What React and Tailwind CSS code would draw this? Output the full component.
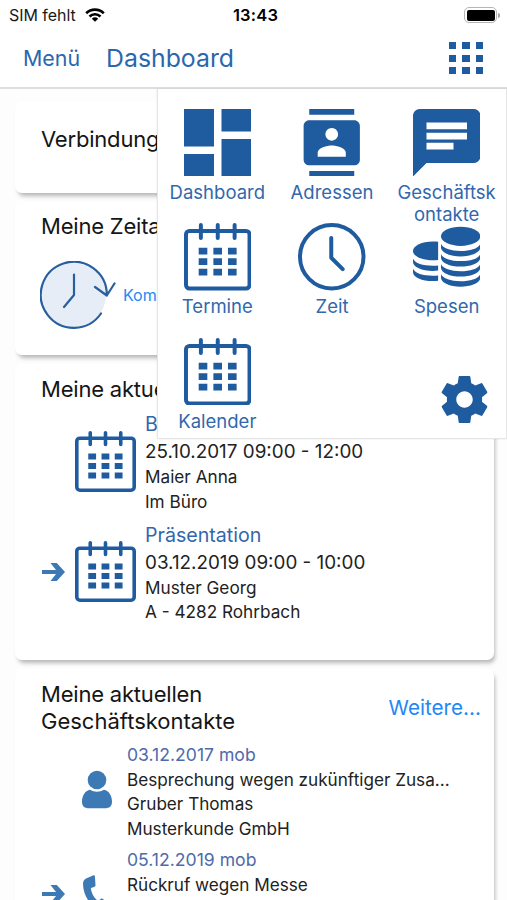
import React from "react";

const CalendarIcon = ({ className }) => (
  <svg viewBox="0 0 68 68" className={className} fill="none">
    <rect x="2" y="8" width="64" height="58" rx="3.5" stroke="currentColor" strokeWidth="4" />
    <path
      d="M17 2v13M34 2v13M51 2v13"
      stroke="currentColor"
      strokeWidth="4"
      strokeLinecap="round"
    />
    <path
      d="M14.8 25h8.7v6.8h-8.7zM29.6 25h8.7v6.8h-8.7zM44.3 25H53v6.8h-8.7zM14.8 35.6h8.7v6.8h-8.7zM29.6 35.6h8.7v6.8h-8.7zM44.3 35.6H53v6.8h-8.7zM14.8 46.2h8.7V53h-8.7zM29.6 46.2h8.7V53h-8.7zM44.3 46.2H53V53h-8.7z"
      fill="currentColor"
    />
  </svg>
);

const DashboardIcon = ({ className }) => (
  <svg viewBox="3 3 18 18" className={className} fill="currentColor">
    <path d="M3 13h8V3H3v10zm0 8h8v-6H3v6zm10 0h8V11h-8v10zm0-18v6h8V3h-8z" />
  </svg>
);

const ContactsIcon = ({ className }) => (
  <svg viewBox="0 0 24 24" className={className} fill="currentColor">
    <path d="M20 0H4v2h16V0zM4 24h16v-2H4v2zM20 4H4c-1.1 0-2 .9-2 2v12c0 1.1.9 2 2 2h16c1.1 0 2-.9 2-2V6c0-1.1-.9-2-2-2zm-8 2.75c1.24 0 2.25 1.01 2.25 2.25s-1.01 2.25-2.25 2.25S9.75 10.24 9.75 9 10.76 6.75 12 6.75zM17 17H7v-1.5c0-1.67 3.33-2.5 5-2.5s5 .83 5 2.5V17z" />
  </svg>
);

const ChatIcon = ({ className }) => (
  <svg viewBox="2 2 20 20" className={className} fill="currentColor">
    <path d="M20 2H4c-1.1 0-1.99.9-1.99 2L2 22l4-4h14c1.1 0 2-.9 2-2V4c0-1.1-.9-2-2-2zM6 9h12v2H6V9zm8 5H6v-2h8v2zm4-6H6V6h12v2z" />
  </svg>
);

const ClockIcon = ({ className }) => (
  <svg viewBox="0 0 68 68" className={className} fill="none">
    <circle cx="34" cy="34" r="32" stroke="currentColor" strokeWidth="4" />
    <path
      d="M33.5 15v20l11.5 11.5"
      stroke="currentColor"
      strokeWidth="4"
      strokeLinecap="round"
      strokeLinejoin="round"
    />
  </svg>
);

const CoinsIcon = ({ className }) => (
  <svg viewBox="0 -3.7 68 68" className={className} fill="currentColor">
    <ellipse cx="48" cy="9.7" rx="19.8" ry="9.7" />
    <path d="M28.2 17.3C30 22 38 24.5 48 24.5S66 22 67.8 17.3V21c0 5-8.8 9-19.8 9s-19.8-4-19.8-9z" />
    <path d="M28.2 27.5C30 32.2 38 34.7 48 34.7s18-2.5 19.8-7.2v3.7c0 5-8.8 9-19.8 9s-19.8-4-19.8-9z" />
    <path d="M28.2 37.6C30 42.3 38 44.8 48 44.8s18-2.5 19.8-7.2v3.7c0 5-8.8 9-19.8 9s-19.8-4-19.8-9z" />
    <path d="M28.2 47.7C30 52.4 38 54.9 48 54.9s18-2.5 19.8-7.2v3.7c0 5-8.8 9-19.8 9s-19.8-4-19.8-9z" />
    <path d="M25.3 15.3C23.6 15 21.8 14.9 20 14.9c-11 0-20 4.2-20 9.5s9 9.5 20 9.5c1.8 0 3.6-.1 5.3-.4z" />
    <path d="M0 32.3c2 4.5 10 7 20 7 1.8 0 3.6-.1 5.3-.3v5.2c-1.7.3-3.5.4-5.3.4-11 0-20-4-20-9z" />
    <path d="M0 42.5c2 4.5 10 7 20 7 1.8 0 3.6-.1 5.3-.3v5.2c-1.7.3-3.5.4-5.3.4-11 0-20-4-20-9z" />
  </svg>
);

const GearIcon = ({ className }) => (
  <svg viewBox="2 2 20 20" className={className} fill="currentColor">
    <path d="M19.43 12.98c.04-.32.07-.64.07-.98s-.03-.66-.07-.98l2.11-1.65c.19-.15.24-.42.12-.64l-2-3.46c-.12-.22-.39-.3-.61-.22l-2.49 1c-.52-.4-1.08-.73-1.69-.98l-.38-2.65C14.46 2.18 14.25 2 14 2h-4c-.25 0-.46.18-.49.42l-.38 2.65c-.61.25-1.17.59-1.69.98l-2.49-1c-.23-.09-.49 0-.61.22l-2 3.46c-.13.22-.07.49.12.64l2.11 1.65c-.04.32-.07.65-.07.98s.03.66.07.98l-2.11 1.65c-.19.15-.24.42-.12.64l2 3.46c.12.22.39.3.61.22l2.49-1c.52.4 1.08.73 1.69.98l.38 2.65c.03.24.24.42.49.42h4c.25 0 .46-.18.49-.42l.38-2.65c.61-.25 1.17-.59 1.69-.98l2.49 1c.23.09.49 0 .61-.22l2-3.46c.12-.22.07-.49-.12-.64l-2.11-1.65zM12 15.5c-1.93 0-3.5-1.57-3.5-3.5s1.57-3.5 3.5-3.5 3.5 1.57 3.5 3.5-1.57 3.5-3.5 3.5z" />
  </svg>
);

const ArrowIcon = ({ className }) => (
  <svg viewBox="0 0 24 18" className={className} fill="currentColor">
    <path d="M0 7h14L8.5 0h6.3L23 9l-8.2 9H8.5L14 11H0z" />
  </svg>
);

const PersonIcon = ({ className }) => (
  <svg viewBox="0 0 32 40" className={className} fill="currentColor">
    <circle cx="16" cy="10" r="9.3" />
    <path d="M9 19.8c4 2.6 10 2.6 14 0 5 .8 8 6.2 8 12 0 4.5-2.5 6.5-7 6.5H8c-4.5 0-7-2-7-6.5 0-5.8 3-11.2 8-12z" />
  </svg>
);

const PhoneIcon = ({ className }) => (
  <svg viewBox="0 0 30 36" className={className} fill="currentColor">
    <path d="M4 3.5 11 .5c1-.4 1.8 0 1.9 1l.6 8.5c0 1-.4 1.6-1.3 1.9l-3.4 1c.5 5 3 9.5 7 13l3-2c.8-.6 1.600-.5 2.300.2l5.500 6c.6.8.5 1.500-.3 2.200l-4.500 3.200C10 34 1.500 22 1 9.500.9 6.500 2 4.500 4 3.500z" />
  </svg>
);

const HistoryIcon = ({ className }) => (
  <svg viewBox="0 0 76 68" className={className} fill="none">
    <circle cx="34" cy="34" r="32" fill="#e7edf6" />
    <path
      d="M61 52.5A33 33 0 1 1 66.8 34M34 13.5V34l-10 12M55 26l11.8 8.5L74.5 22.5"
      stroke="currentColor"
      strokeWidth="2.2"
      strokeLinecap="round"
      strokeLinejoin="round"
    />
  </svg>
);

const menuItems = [
  { label: "Dashboard", Icon: DashboardIcon },
  { label: "Adressen", Icon: ContactsIcon },
  { label: "Geschäftskontakte", Icon: ChatIcon },
  { label: "Termine", Icon: CalendarIcon },
  { label: "Zeit", Icon: ClockIcon },
  { label: "Spesen", Icon: CoinsIcon },
  { label: "Kalender", Icon: CalendarIcon },
];

const appointments = [
  {
    title: "B",
    time: "25.10.2017 09:00 - 12:00",
    person: "Maier Anna",
    place: "Im Büro",
  },
  {
    title: "Präsentation",
    time: "03.12.2019 09:00 - 10:00",
    person: "Muster Georg",
    place: "A - 4282 Rohrbach",
    next: true,
  },
];

const StatusBar = () => (
  <div className="grid grid-cols-3 items-center h-[30px] pl-[9px] pr-[7px] text-[#1a1a1a]">
    <div className="flex items-center gap-[9px]">
      <span className="text-[16px] tracking-[-0.05px]">SIM fehlt</span>
      <svg viewBox="0 0 20 14" className="w-5 h-[14px]" fill="none" stroke="#000" strokeWidth="2.6">
        <path d="M1.2 5.2a12.6 12.6 0 0 1 17.6 0" />
        <path d="M4.5 8.5a8 8 0 0 1 11 0" />
        <path d="M10 13.8 6.8 10.7a4.7 4.7 0 0 1 6.4 0z" fill="#000" stroke="none" />
      </svg>
    </div>
    <span className="pl-[2px] text-center text-[16.5px] font-semibold tracking-[0.2px] text-black">
      13:43
    </span>
    <div className="flex items-center justify-end gap-px">
      <div className="w-[33px] h-4 rounded-[5px] border-[1.5px] border-[#b5b5b5] p-[1.5px]">
        <div className="h-full rounded-[2px] bg-black"></div>
      </div>
      <div className="w-[2px] h-[5px] rounded-r bg-[#a5a5a5]"></div>
    </div>
  </div>
);

const Card = ({ className, children }) => (
  <section
    className={`bg-white rounded-[7px] shadow-[2px_4px_4px_-1px_rgba(0,0,0,0.28)] pl-[26px] ${className}`}
  >
    {children}
  </section>
);

const CardTitle = ({ children }) => (
  <h2 className="text-[22px] leading-[27px] tracking-[-0.2px] text-[#151515]">{children}</h2>
);

const Menu = () => (
  <div className="absolute top-0 right-0 w-[350px] h-[349.5px] bg-white border border-t-0 border-[#e6e6e6] shadow-[0_0_2px_rgba(0,0,0,0.1)]">
    <div className="grid grid-cols-3 auto-rows-[114.7px] pt-[19.5px] pl-[2px] pr-[2px]">
      {menuItems.map(({ label, Icon }) => (
        <button key={label} className="flex flex-col items-center text-[#1f5b9f]">
          <Icon className="w-[67.5px] h-[67.5px] shrink-0" />
          <span className="w-[100px] mt-[4.5px] text-[18.5px] leading-[22px] break-all text-center text-[#3168ad]">
            {label}
          </span>
        </button>
      ))}
    </div>
    <button className="absolute right-[18.5px] bottom-[15px] text-[#1f5b9f]">
      <GearIcon className="w-[47px] h-[47px]" />
    </button>
  </div>
);

const App = () => {
  return (
    <div className="h-[900px] overflow-hidden bg-[#fdfdfd] font-['Inter',sans-serif]">
      {/* Header */}
      <header className="h-[89px] bg-white border-b-2 border-[#dedede]">
        <StatusBar />
        <div className="flex items-center h-14 pl-[23px] pr-[24px] text-[#2a67ae]">
          <span className="text-[21.4px]">Menü</span>
          <h1 className="ml-[26px] mt-px text-[24.8px]">Dashboard</h1>
          <div className="grid grid-cols-3 gap-x-[6px] gap-y-[5.5px] ml-auto">
            {[...Array(9)].map((_, i) => (
              <div key={i} className="w-[7.5px] h-[7px] bg-[#1f5b9f]"></div>
            ))}
          </div>
        </div>
      </header>

      <main className="relative flex flex-col gap-[9px] pt-[13px] pl-[15px] pr-[13px]">
        <Card className="h-[91px] pt-6">
          <CardTitle>Verbindung</CardTitle>
        </Card>

        <Card className="h-[153px] pt-[11px]">
          <CardTitle>Meine Zeita</CardTitle>
          <div className="flex items-center mt-[21px]">
            <HistoryIcon className="w-[76px] h-[68px] -ml-px text-[#285f9f]" />
            <span className="ml-[7px] text-[16px] text-[#2388f5]">Kom</span>
          </div>
        </Card>

        <Card className="h-[296px] pt-[12px]">
          <CardTitle>Meine aktuellen</CardTitle>
          {appointments.map((item) => (
            <div key={item.title} className="flex h-[110.5px] pt-[7px]">
              <div className="flex w-[34px] pt-[30px]">
                {item.next && <ArrowIcon className="w-6 h-[18px] mt-[12px] ml-px text-[#3d7ab5]" />}
              </div>
              <CalendarIcon className="w-[61px] h-[61px] mt-[20.5px] text-[#1f5b9f]" />
              <div className="ml-[9px] text-[17.2px] text-[#222]">
                <p className="text-[19.6px] leading-[28px] text-[#3168ad]">{item.title}</p>
                <p className="text-[18.85px] leading-[27px]">{item.time}</p>
                <p className="leading-[24.5px]">{item.person}</p>
                <p className="leading-[24.5px]">{item.place}</p>
              </div>
            </div>
          ))}
        </Card>

        <Card className="h-[300px] pt-[12px]">
          <div className="flex items-center justify-between pr-[13px]">
            <div className="w-[220px]">
              <CardTitle>
                Meine aktuellen <span className="tracking-[0px]">Geschäftskontakte</span>
              </CardTitle>
            </div>
            <a className="text-[20.7px] text-[#2388f5]">Weitere...</a>
          </div>
          <div className="flex mt-[8px] h-[105px]">
            <div className="w-[86px] pl-10">
              <PersonIcon className="w-8 h-10 mt-[27px] text-[#3d7ab5]" />
            </div>
            <div className="text-[17.15px] leading-[24.5px] text-[#222]">
              <p className="text-[17.6px] text-[#4f6aa9]">03.12.2017 mob</p>
              <p>Besprechung wegen zukünftiger Zusa...</p>
              <p>Gruber Thomas</p>
              <p>Musterkunde GmbH</p>
            </div>
          </div>
          <div className="flex">
            <div className="flex w-[86px] pt-[27px] text-[#3d7ab5]">
              <ArrowIcon className="w-6 h-[18px] mt-[10px] ml-px" />
              <PhoneIcon className="w-[30px] h-9 ml-[16px]" />
            </div>
            <div className="text-[17.15px] leading-[24.5px] text-[#222]">
              <p className="text-[17.6px] text-[#4f6aa9]">05.12.2019 mob</p>
              <p>Rückruf wegen Messe</p>
            </div>
          </div>
        </Card>

        <Menu />
      </main>
    </div>
  );
};

export default App;
